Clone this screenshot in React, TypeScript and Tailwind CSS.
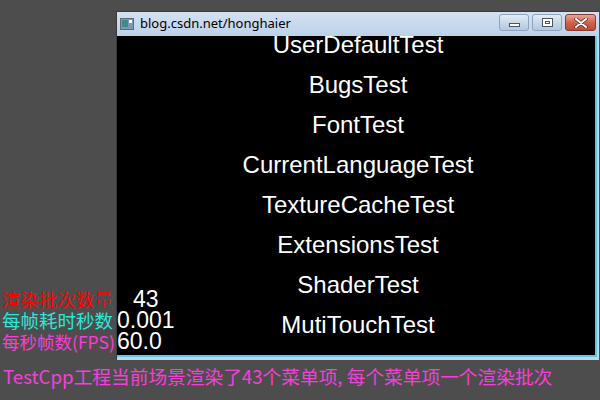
import React from "react";

const items = [
  "UserDefaultTest",
  "BugsTest",
  "FontTest",
  "CurrentLanguageTest",
  "TextureCacheTest",
  "ExtensionsTest",
  "ShaderTest",
  "MutiTouchTest",
];

function Btn({ kind }: { kind: "min" | "max" | "close" }) {
  const base =
    "h-[17px] rounded-[3px] border flex items-center justify-center";
  if (kind === "close")
    return (
      <div
        className={`${base} w-[31px] border-[#8a3a2e] bg-gradient-to-b from-[#e8a496] via-[#d0624e] to-[#c04a34]`}
      >
        <svg width="14" height="10" viewBox="0 0 14 10">
          <path d="M2 1 L12 9 M12 1 L2 9" stroke="#5a2a22" strokeWidth="3.4" strokeLinecap="round" />
          <path d="M2 1 L12 9 M12 1 L2 9" stroke="#ffffff" strokeWidth="2" strokeLinecap="round" />
        </svg>
      </div>
    );
  return (
    <div
      className={`${base} w-[30px] border-[#8ea3bd] bg-gradient-to-b from-[#e4edf7] via-[#c9d8ea] to-[#b4c8e0]`}
    >
      {kind === "min" ? (
        <div className="w-[11px] h-[4px] mt-[5px] border border-[#4a5563] bg-white" />
      ) : (
        <div className="w-[11px] h-[9px] border border-[#4a5563] bg-white flex items-center justify-center">
          <div className="w-[5px] h-[3px] border border-[#4a5563]" />
        </div>
      )}
    </div>
  );
}

export default function App() {
  return (
    <div
      className="relative w-[600px] h-[400px] bg-[#4d4d4d] overflow-hidden pt-[11px] flex flex-col"
      style={{ fontFamily: '"Liberation Sans", Arial, sans-serif' }}
    >
      {/* Window */}
      <div className="ml-[116px] w-[483px] h-[349px] flex flex-col bg-[#c3d5ea] border-t border-l border-[#3a3a3a]">
        <div className="h-[24px] flex items-center bg-gradient-to-b from-[#d4e2f2] to-[#bcd1e8]">
          <svg width="14" height="12" viewBox="0 0 14 12" className="ml-[3px]">
            <rect x="0.5" y="0.5" width="13" height="11" fill="#7d9bb0" stroke="#5c6c78" />
            <rect x="2" y="2" width="6" height="7" fill="#3f8a8a" />
            <rect x="9" y="2" width="3" height="3" fill="#ffffff" />
          </svg>
          <span
            className="ml-[6px] text-[13px] text-black"
            style={{ fontFamily: '"Noto Sans", "Liberation Sans", sans-serif' }}
          >
            blog.csdn.net/honghaier
          </span>
          <div className="ml-auto mr-[3px] -mt-[3px] flex gap-[3px]">
            <Btn kind="min" />
            <Btn kind="max" />
            <Btn kind="close" />
          </div>
        </div>
        <div className="flex-1 bg-black border-r-2 border-b-2 border-[#5cc6ee] mr-[2px] mb-[3px] overflow-hidden">
          <div className="-mt-[11px] pl-[4px] flex flex-col items-center">
            {items.map((t) => (
              <div key={t} className="h-[40px] leading-[40px] text-[24px] text-white">
                {t}
              </div>
            ))}
          </div>
        </div>
      </div>

      {/* Bottom caption */}
      <div
        className="mt-[5px] ml-[3px] text-[18.7px] leading-[22px] text-[#f53fd9] whitespace-nowrap"
        style={{ fontFamily: '"Noto Sans CJK SC", "Noto Sans", sans-serif' }}
      >
        TestCpp工程当前场景渲染了43个菜单项, 每个菜单项一个渲染批次
      </div>

      {/* Stats overlay */}
      <div className="absolute left-[2px] top-[289px] flex flex-col">
        {[
          { l: "渲染批次数量", c: "text-[#ff0000] text-[18.5px]", v: "43", pad: "pl-[16px]" },
          { l: "每帧耗时秒数", c: "text-[#2ee6d8] text-[18.5px]", v: "0.001", pad: "" },
          { l: "每秒帧数(FPS)", c: "text-[#f53fd9] text-[17.5px]", v: "60.0", pad: "" },
        ].map((r) => (
          <div key={r.l} className="h-[21px] flex items-center">
            <div
              className={`w-[115px] shrink-0 leading-[21px] whitespace-nowrap ${r.c}`}
              style={{ fontFamily: '"Noto Sans CJK SC", "Noto Sans", sans-serif' }}
            >
              {r.l}
            </div>
            <div className={`text-[23px] leading-[21px] text-white ${r.pad}`}>{r.v}</div>
          </div>
        ))}
      </div>
    </div>
  );
}
